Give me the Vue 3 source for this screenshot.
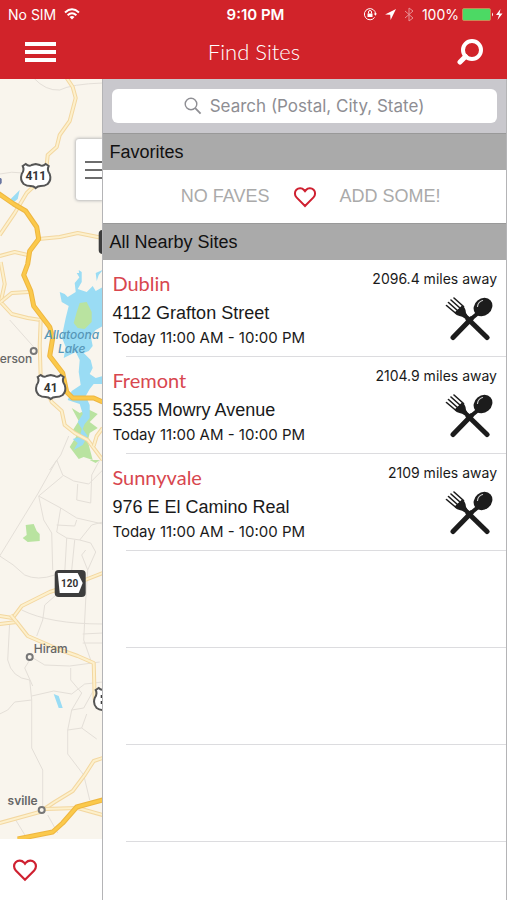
<script setup>
import {ref} from 'vue'

const search = ref('')
const sites = ref([
  {name: 'Dublin', address: '4112 Grafton Street', hours: 'Today 11:00 AM - 10:00 PM', distance: '2096.4'},
  {name: 'Fremont', address: '5355 Mowry Avenue', hours: 'Today 11:00 AM - 10:00 PM', distance: '2104.9'},
  {name: 'Sunnyvale', address: '976 E El Camino Real', hours: 'Today 11:00 AM - 10:00 PM', distance: '2109'},
])
const emptyRows = 3

const heart = 'M12 20 L3.5 11.4 C1.4 9.2 1.4 5.8 3.4 3.8 C5.5 1.7 9 1.8 11 4 L12 5.2 L13 4 C15 1.8 18.5 1.7 20.6 3.8 C22.6 5.8 22.6 9.2 20.5 11.4 Z'
const shield = 'M-13 -10 L-10 -12 Q-7 -9 -4 -11 L0 -12 L4 -11 Q7 -9 10 -12 L13 -10 Q11 -6 14 -2 Q16 4 12 8 Q9 10 5 10 Q2 10 0 12 Q-2 10 -5 10 Q-9 10 -12 8 Q-16 4 -14 -2 Q-11 -6 -13 -10 Z'

const streets = [
  'M34 78 Q46 91 60 90 Q72 84 103 83',
  'M0 174 Q12 171 24 173',
  'M57 460 L38 494 L0 556 Q14 564 25 575 Q38 581 55 575',
  'M57 460 L63 475 L74 481 L89 484 L103 470',
  'M63 476 L39 496 L61 508 L77 518 L103 524',
  'M39 496 L44 520 L52 533 L53 570',
  'M61 508 L57 532 L67 538 L80 540 L92 525 L103 522',
  'M78 484 L77 500 L91 503 L92 475 L100 460',
  'M57 525 L75 526 L77 520',
  'M67 538 L65 573 L62 590 L45 605 L43 620 L37 636',
  'M75 540 L72 570 M86 550 L82 555 L88 570 L96 552 L91 543 L80 540',
  'M88 570 L86 600 L84 640 L92 663',
  'M22 610 Q50 624 103 624',
  'M83 634 L103 633 M83 643 L103 643',
  'M10 622 L8 660 Q12 678 30 680 L32 700 L32 748 L43 770 L43 808',
  'M30 660 L25 668 L33 686 M32 700 L15 702 L8 710 L0 714',
  'M32 696 L54 691 L72 694 L85 684 L103 682',
  'M30 656 L45 665 L70 666 L100 662',
  'M71 668 L71 680 L82 693 L72 710 L68 730 L68 754 L84 775 L90 800',
  'M72 710 L84 708 L94 690 M68 730 L82 728 L97 739 M82 728 L87 714',
  'M16 820 L27 838 M48 815 L58 833',
  'M10 320 L34 347 M69 436 L61 455 L50 470',
]

const roads = [
  'M67 78 L73 87 L76 98 L70 121 L60 135 L57 147 L48 155 L46 175 L27 193 L15 213 L0 235',
  'M39 239 L60 237 L78 233 L103 238',
  'M0 256 L15 252 L28 255',
  'M1 262 L5 284 L1 302 L12 314 L28 318 L41 320',
  'M1 302 L12 293 L29 292',
  'M41 320 L40 345 L41 378 L52 402 L62 411 L65 425 L75 433 L88 440 L103 460',
  'M103 428 L97 436 L94 446',
  'M0 616 L13 618 L22 606 L50 592 L75 584 L103 573',
  'M0 624 L17 622 L28 636 L58 649 L78 656 L94 663 L95 700',
  'M17 622 L11 615',
  'M0 823 L40 812 L55 802 L73 791 L85 775 L94 761 L103 758',
  'M45 809 L78 808 L103 815',
]

const highways = [
  'M-2 193 L14 204 L26 211 L37 227 L39 239 L30 251 L28 264 L24 275 L31 291 L34 306 L50 327 L53 338 L50 356 L63 373 L67 392 L73 398 L94 398 L103 402',
  'M18 839 L53 832 L63 823 L77 807 L103 800',
]
</script>

<template>
  <div class="app">
    <header>
      <div class="status">
        <div class="side">
          <span>No SIM</span>
          <svg width="16" height="12" viewBox="0 0 16 12" fill="none" stroke="#fff" stroke-width="2">
            <path d="M1 4.4 Q8 -1.8 15 4.4"/>
            <path d="M3.6 7.2 Q8 3.2 12.4 7.2"/>
            <path d="M8 11.5 L5.5 9 Q8 7 10.5 9 Z" fill="#fff" stroke="none"/>
          </svg>
        </div>
        <strong>9:10 PM</strong>
        <div class="side end">
          <svg width="14" height="14" viewBox="0 0 14 14" fill="none" stroke="#fff">
            <path d="M11.6 10.4 A5.6 5.6 0 1 1 12.6 7"/>
            <path d="M10.8 6.4 h3.2 l-1.6 2.4 z" fill="#fff" stroke="none"/>
            <rect x="4.5" y="6.5" width="5" height="3.5" fill="#fff" stroke="none"/>
            <path d="M5.5 6.5 V5 a1.5 1.5 0 0 1 3 0 V6.5"/>
          </svg>
          <svg width="11" height="11" viewBox="0 0 11 11" fill="#fff">
            <path d="M11 0 L0 5.4 L5.2 5.8 L5.6 11 Z"/>
          </svg>
          <svg width="10" height="15" viewBox="0 0 10 15" fill="none" stroke="#fff" opacity="0.5">
            <path d="M1 4 L9 11 L5 14 V1 L9 4 L1 11"/>
          </svg>
          <span>100%</span>
          <svg class="battery" width="41" height="13" viewBox="0 0 41 13">
            <rect x="0.5" y="0.5" width="28" height="12" rx="1.5" fill="#4cd964" stroke="#c98a55"/>
            <path d="M30 4.5 Q32 6.5 30 8.5 Z" fill="#fff"/>
            <path d="M38.5 1 L34 7 L37 7 L35.5 12 L40.5 5.5 L37.5 5.5 Z" fill="#fff"/>
          </svg>
        </div>
      </div>
      <nav>
        <button aria-label="Menu">
          <svg width="31" height="20" viewBox="0 0 31 20" fill="#fff">
            <rect width="31" height="4"/>
            <rect y="8" width="31" height="4"/>
            <rect y="16" width="31" height="4"/>
          </svg>
        </button>
        <h1>Find Sites</h1>
        <button aria-label="Search">
          <svg width="31" height="26" viewBox="-5 0 31 26" fill="none" stroke="#fff">
            <circle cx="15" cy="11" r="9" stroke-width="4"/>
            <path d="M8.5 17.5 L3 23" stroke-width="5" stroke-linecap="round"/>
          </svg>
        </button>
      </nav>
    </header>

    <main>
      <div class="left">
        <div class="map">
          <svg class="tiles" viewBox="0 79 103 760" preserveAspectRatio="xMidYMid slice">
            <rect y="79" width="103" height="760" fill="#f9f5ed"/>
            <g fill="#b9e3a0">
              <path d="M26 525 L34 524 L37 531 L40 534 L40 541 L28 542 L23 538 L27 535 Z"/>
              <path d="M72 408 L80 413 L88 409 L98 414 L90 422 L98 428 L90 433 L88 441 L93 460 L84 457 L79 459 L70 447 L78 434 L72 432 L79 421 Z"/>
              <path d="M90 460 h10 l-4 3 z"/>
            </g>
            <g fill="#9adcf4">
              <path d="M60 292 L65 294 L68 297 L76 292 L75 283 L80 277 L79 270 L82 272 L82 282 L78 289 L87 292 L93 286 L96 291 L103 287 L103 326 L96 330 L91 336 L93 346 L89 351 L84 353 L91 360 L93 368 L90 374 L96 378 L103 376 L103 384 L94 384 L90 389 L86 396 L90 405 L90 418 L85 424 L83 429 L88 436 L83 445 L74 450 L78 443 L73 439 L80 437 L82 429 L78 422 L83 414 L80 404 L68 400 L72 391 L81 385 L79 372 L80 360 L76 352 L64 358 L66 347 L62 337 L66 318 L69 306 L62 302 Z"/>
              <path d="M11 199 L20 190 L18 199 L13 203 Z M97 281 L96 273 L103 270 L99 275 Z M77 273 l4 0 l-1 5 z M54 694 L59 696 L63 708 L59 708 Z"/>
            </g>
            <path d="M80 303 L87 302 L92 312 L92 322 L85 329 L78 328 L74 323 L77 312 Z" fill="#b9e3a0"/>
            <path v-for="d in streets" :key="d" :d="d" fill="none" stroke="#e4dfd8" stroke-width="1"/>
            <g v-for="d in roads" :key="d" fill="none" stroke-linejoin="round">
              <path :d="d" stroke="#f3d7a0" stroke-width="4"/>
              <path :d="d" stroke="#fdf0cc" stroke-width="2"/>
            </g>
            <g v-for="d in highways" :key="d" fill="none" stroke-linejoin="round">
              <path :d="d" stroke="#eeb640" stroke-width="5"/>
              <path :d="d" stroke="#fbc94b" stroke-width="3"/>
            </g>

            <g fill="#f9f5ed" stroke="#777" stroke-width="2">
              <circle cx="34" cy="351" r="3"/>
              <circle cx="30" cy="657" r="3"/>
              <circle cx="42" cy="810" r="3"/>
            </g>
            <g class="place">
              <text x="0" y="363">erson</text>
              <text x="34" y="653">Hiram</text>
              <text class="bold" x="38" y="805" text-anchor="end">sville</text>
            </g>
            <g class="water">
              <text x="72" y="339">Allatoona</text>
              <text x="72" y="353">Lake</text>
            </g>

            <g class="shield">
              <path :d="shield" transform="translate(36 176)"/>
              <text x="36" y="180">411</text>
              <path :d="shield" transform="translate(51 387)"/>
              <text x="51" y="392">41</text>
              <path :d="shield" transform="translate(109 700)"/>
              <rect x="101" y="695" width="2" height="3" class="dark"/>
              <rect x="101" y="701" width="2" height="3" class="dark"/>
              <rect x="99" y="230" width="24" height="24" rx="4" class="dark"/>
              <rect x="55" y="570" width="31" height="27" rx="4" class="dark"/>
              <path d="M58 573 H78 L83 583 L79 593 H60 Z" class="plate"/>
              <text x="70" y="587" class="small">120</text>
            </g>
            <path d="M0 177 L2 179 V183 L0 185 Z" fill="#6975a0"/>
          </svg>
          <button class="drawer" aria-label="List">
            <svg width="18" height="18" viewBox="0 0 18 18" fill="#6d6d6d">
              <rect width="18" height="2"/>
              <rect y="8" width="18" height="2"/>
              <rect y="16" width="18" height="2"/>
            </svg>
          </button>
        </div>
        <footer>
          <button aria-label="Favorites">
            <svg width="26" height="24" viewBox="0 0 24 22">
              <path :d="heart" fill="none" stroke="#cf2030" stroke-width="2"/>
            </svg>
          </button>
        </footer>
      </div>

      <section class="panel">
        <div class="searchbar">
          <label>
            <svg width="18" height="18" viewBox="0 0 18 18" fill="none" stroke="#8e8e93">
              <circle cx="7" cy="7" r="5.8" stroke-width="1.4"/>
              <path d="M11.2 11.2 L16.6 16.6" stroke-width="1.8"/>
            </svg>
            <input v-model="search" type="text" placeholder="Search (Postal, City, State)" aria-label="Search (Postal, City, State)">
          </label>
        </div>

        <h2>Favorites</h2>
        <div class="nofaves">
          <span>NO FAVES</span>
          <svg width="24" height="22" viewBox="0 0 24 22">
            <path :d="heart" fill="none" stroke="#cf2030" stroke-width="2"/>
          </svg>
          <span>ADD SOME!</span>
        </div>

        <h2>All Nearby Sites</h2>
        <ul>
          <li v-for="site in sites" :key="site.name">
            <div class="site">
              <div class="info">
                <h3>{{ site.name }}</h3>
                <div class="address">{{ site.address }}</div>
                <div class="hours">{{ site.hours }}</div>
              </div>
              <div class="distance">
                <span>{{ site.distance }} miles away</span>
                <svg width="48" height="44" viewBox="0 0 48 44">
                  <g fill="none" stroke="#1c1c1c" stroke-linecap="round">
                    <path d="M23 22 L42 40.5" stroke-width="5"/>
                    <path d="M32 17 L26 22" stroke-width="4"/>
                    <path d="M26 22 L8 40.5" stroke-width="5"/>
                    <path d="M18 16 L24 23" stroke-width="4"/>
                    <path d="M1.5 8.5 L11 16.5 M3.5 5.5 L13 14 M6 3 L15.5 11.5 M9 1 L18.5 9.5" stroke-width="1.6"/>
                  </g>
                  <path d="M9.5 15.5 L17 8.5 Q20 10 20.5 13 Q20.5 16 22.5 19 L20 21.5 Q17 19 14.5 19 Q11 18.5 9.5 15.5 Z" fill="#1c1c1c"/>
                  <ellipse cx="38" cy="10" rx="10" ry="8.5" transform="rotate(-40 38 10)" fill="#1c1c1c"/>
                  <path d="M32.5 9.5 Q33 5 37.5 3.5" fill="none" stroke="#ccc" stroke-width="1.2" stroke-linecap="round"/>
                </svg>
              </div>
            </div>
          </li>
          <li v-for="n in emptyRows" :key="n">
            <div class="site"></div>
          </li>
        </ul>
      </section>
    </main>
  </div>
</template>

<style>
body {
  margin: 0;
}
</style>

<style scoped>
.app {
  display: flex;
  flex-direction: column;
  min-height: 100vh;
  background: #fff;
  font-family: "Liberation Sans", Arial, sans-serif;
  color: #1a1a1a;
}

svg {
  display: block;
}

button {
  padding: 0;
  border: none;
  background: none;
}

header {
  background: #d1232a;
  color: #fff;
}

.status {
  display: flex;
  align-items: center;
  height: 28px;
  padding: 0 4px 0 8px;
  font-family: Inter, sans-serif;
  font-size: 14px;
}

.status strong {
  font-size: 15px;
  font-weight: 600;
}

.side {
  display: flex;
  flex: 1;
  align-items: center;
  gap: 8px;
}

.end {
  justify-content: flex-end;
}

.battery {
  margin-left: -5px;
}

nav {
  display: flex;
  align-items: center;
  justify-content: space-between;
  height: 51px;
  padding: 0 24px 3px 25px;
  box-sizing: border-box;
}

h1 {
  margin: 0;
  font-family: Lato, sans-serif;
  font-size: 22px;
  font-weight: 300;
  line-height: 28px;
}

main {
  display: flex;
  flex: 1;
}

.left {
  display: flex;
  flex-direction: column;
  flex: 1;
}

.map {
  position: relative;
  flex: 1;
  overflow: hidden;
  background: #f9f5ed;
}

.tiles {
  position: absolute;
  width: 100%;
  height: 100%;
}

.place {
  font-family: Inter, sans-serif;
  font-size: 12px;
  font-weight: 500;
  fill: #666;
}

.place .bold {
  font-weight: 600;
}

.water {
  font-family: Inter, sans-serif;
  font-size: 12px;
  font-style: italic;
  font-weight: 500;
  fill: #5797b8;
  text-anchor: middle;
}

.shield {
  font-family: Roboto, sans-serif;
  font-size: 12px;
  font-weight: 700;
  text-anchor: middle;
}

.shield path {
  fill: #fff;
  stroke: #555;
  stroke-width: 2;
}

.shield text {
  fill: #333;
}

.shield .small {
  font-size: 10px;
}

.shield .dark {
  fill: #3d3d3d;
}

.shield .plate {
  stroke: none;
}

/* pull-out handle lying over the map */
.drawer {
  position: absolute;
  top: 60px;
  right: 0;
  width: 26px;
  height: 61px;
  padding-left: 9px;
  border-radius: 3px 0 0 3px;
  background: #fff;
  box-shadow: 0 0 3px 1px #bbb;
  overflow: hidden;
}

footer {
  display: flex;
  align-items: center;
  height: 61px;
  padding-left: 12px;
}

.panel {
  flex: 0 0 calc(80% - 1px);
  box-sizing: border-box;
  border: 1px solid #b4b4b6;
  border-top: none;
  border-bottom: none;
  background: #fff;
}

.searchbar {
  padding: 10px 9px;
  background: #c9c8cd;
}

.searchbar label {
  display: flex;
  align-items: center;
  justify-content: center;
  gap: 8px;
  height: 34px;
  border-radius: 6px;
  background: #fff;
}

input {
  flex: 0 1 216px;
  min-width: 0;
  padding: 0;
  border: none;
  outline: none;
  background: none;
  font-family: Inter, sans-serif;
  font-size: 17px;
}

input::placeholder {
  color: #8e8e93;
  opacity: 1;
}

h2 {
  margin: 0;
  padding-left: 6px;
  border-top: 1px solid #999;
  background: #aaa;
  font-size: 18px;
  font-weight: 400;
  line-height: 36px;
  color: #111;
}

.nofaves {
  display: flex;
  align-items: center;
  justify-content: center;
  gap: 23px;
  height: 53px;
  padding-left: 12px;
  font-size: 18px;
  color: #aaa;
}

ul {
  margin: 0;
  padding: 0;
  list-style: none;
}

li::after {
  content: "";
  display: block;
  height: 1px;
  margin-left: 23px;
  background: #dcdcdf;
}

.site {
  display: flex;
  justify-content: space-between;
  min-height: 96px;
  padding: 9px 9px 0;
  box-sizing: border-box;
}

h3 {
  margin: 0;
  font-family: Lato, sans-serif;
  font-size: 20px;
  font-weight: 400;
  line-height: 28px;
  color: #d8474f;
}

.address {
  font-size: 18px;
  line-height: 32px;
}

.hours {
  font-family: Inter, sans-serif;
  font-size: 15px;
  line-height: 18px;
}

.distance {
  display: flex;
  flex-direction: column;
  align-items: flex-end;
  gap: 8px;
  font-family: Inter, sans-serif;
  font-size: 14px;
  line-height: 20px;
}

.distance svg {
  margin-right: 4px;
}
</style>
